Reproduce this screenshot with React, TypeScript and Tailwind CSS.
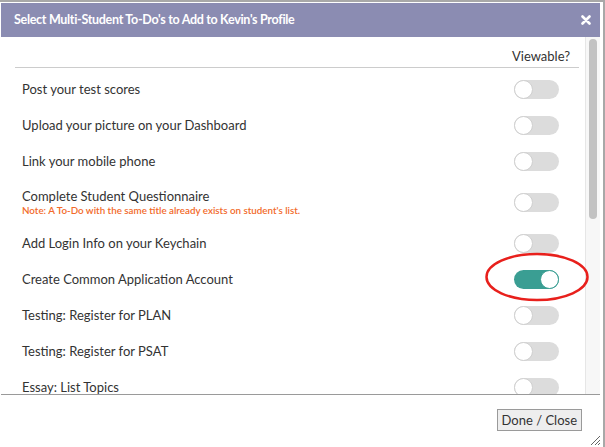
import React from "react";

const rows: { label: string; note?: string; on?: boolean }[] = [
  { label: "Post your test scores" },
  { label: "Upload your picture on your Dashboard" },
  { label: "Link your mobile phone" },
  {
    label: "Complete Student Questionnaire",
    note: "Note: A To-Do with the same title already exists on student's list.",
  },
  { label: "Add Login Info on your Keychain" },
  { label: "Create Common Application Account", on: true },
  { label: "Testing: Register for PLAN" },
  { label: "Testing: Register for PSAT" },
  { label: "Essay: List Topics" },
];

function Toggle({ on }: { on?: boolean }) {
  return on ? (
    <div className="w-[45px] h-[19px] rounded-full bg-[#3a9e93] flex items-center justify-end">
      <div className="w-[19px] h-[19px] rounded-full bg-white border-[1.5px] border-[#3a9e93]" />
    </div>
  ) : (
    <div className="w-[45px] h-[19px] rounded-full bg-[#dcdcdc] flex items-center justify-start">
      <div className="w-[19px] h-[19px] rounded-full bg-white border border-[#cfcfcf]" />
    </div>
  );
}

export default function App() {
  return (
    <div
      className="w-[605px] h-[447px] bg-white border-t-2 border-r-2 border-[#a8a8a8] pt-[1px] pl-[1px] pr-[3px] flex flex-col relative overflow-hidden"
      style={{ fontFamily: "Lato, 'Open Sans', sans-serif" }}
    >
      <div className="h-[34px] shrink-0 bg-[#8b8cb2] flex items-center justify-between pl-[13px] pr-[9px]">
        <span className="text-white font-bold text-[12.5px] tracking-[-0.3px]">
          Select Multi-Student To-Do's to Add to Kevin's Profile
        </span>
        <svg width="10" height="10" viewBox="0 0 10 10">
          <path d="M1.5 1.5 L8.5 8.5 M8.5 1.5 L1.5 8.5" stroke="white" strokeWidth="2.6" strokeLinecap="round" />
        </svg>
      </div>
      <div className="h-[358px] shrink-0 flex border-b border-[#9a9a9a]">
        <div className="flex-1 overflow-hidden pl-[14px] pr-[6px]">
          <div className="flex justify-end pt-[10px] pb-[1px] pr-[9px] border-b border-[#cccccc]">
            <span className="text-[13px] text-[#333] leading-[19px]">Viewable?</span>
          </div>
          <div className="mt-[3px] flex flex-col">
            {rows.map((r) => (
              <div
                key={r.label}
                className={`flex items-center justify-between pl-[7px] pr-[20px] ${r.note ? "h-[46px]" : "h-[36px]"}`}
              >
                <div className="flex flex-col">
                  <span className="text-[13px] text-[#333] leading-[16px]">{r.label}</span>
                  {r.note && (
                    <span className="text-[9.8px] font-semibold text-[#f26a2a] leading-[12px]">{r.note}</span>
                  )}
                </div>
                <Toggle on={r.on} />
              </div>
            ))}
          </div>
        </div>
        <div className="w-[15px] shrink-0 bg-[#f7f7f7] border-l border-[#e6e6e6] pt-[2px] flex justify-center">
          <div className="w-[8px] h-[180px] rounded-full bg-[#c2c2c2]" />
        </div>
      </div>
      <div className="flex-1 flex justify-end items-start pt-[14px] pr-[18px]">
        <button className="h-[22px] px-[4px] bg-[#eeeeee] border border-[#9a9a9a] text-[13px] text-[#333] leading-none">
          Done / Close
        </button>
      </div>
      <svg className="absolute right-[2px] bottom-[1px]" width="12" height="12" viewBox="0 0 12 12">
        <path d="M11 2 L2 11 M11 6 L6 11 M11 9 L9 11" stroke="#666" strokeWidth="1" />
      </svg>
      <svg className="absolute left-[484px] top-[249px]" width="106" height="52" viewBox="0 0 106 52">
        <ellipse cx="53" cy="26" rx="50.5" ry="23" fill="none" stroke="#e8201c" strokeWidth="2.5" />
      </svg>
    </div>
  );
}
